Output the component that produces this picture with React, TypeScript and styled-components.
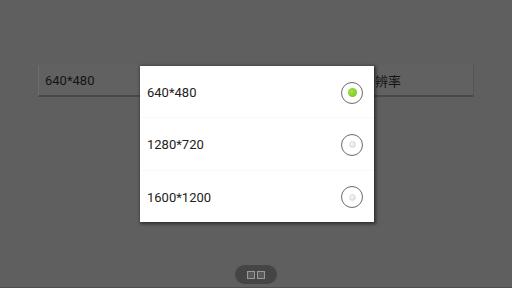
import styled, { createGlobalStyle } from "styled-components";

const GlobalStyle = createGlobalStyle`
  html, body {
    margin: 0;
    padding: 0;
    background: #5f5f5f;
  }
  * { box-sizing: border-box; }
`;

const Screen = styled.div`
  position: relative;
  width: 512px;
  height: 288px;
  overflow: hidden;
  background: #5f5f5f;
  display: flex;
  flex-direction: column;
  font-family: Roboto, "Noto Sans CJK SC", sans-serif;
`;

const FormRow = styled.div`
  display: grid;
  grid-template-columns: 1fr 118px;
  gap: 5px;
  padding: 65px 39px 0 38px;
`;

const Field = styled.div`
  height: 32px;
  display: flex;
  align-items: center;
  padding-left: 6px;
  font-size: 13px;
  color: #141414;
  background: #616161;
  border-left: 1px solid #6c6c6c;
  border-bottom: 2px solid #484848;
  box-shadow: 1px 0 0 #555;
`;

const NavBar = styled.div`
  margin-top: auto;
  display: flex;
  justify-content: center;
  padding-bottom: 3px;
  border-bottom: 1px solid #4f4f4f;
`;

const NavPill = styled.div`
  width: 42px;
  height: 19px;
  border-radius: 10px;
  background: #454545;
  display: flex;
  align-items: center;
  justify-content: center;
  gap: 2px;
`;

const NavIcon = styled.div`
  width: 8px;
  height: 8px;
  border: 1px solid #9a9a9a;
  background: #5a5a5a;
`;

const Overlay = styled.div`
  position: absolute;
  left: 140px;
  top: 66px;
  width: 234px;
  height: 156px;
  background: #fff;
  box-shadow: 1px 1px 3px 1px rgba(0, 0, 0, 0.5);
  display: flex;
  flex-direction: column;
`;

const Option = styled.div<{ $last?: boolean }>`
  flex: 1;
  display: flex;
  align-items: center;
  justify-content: space-between;
  padding: 2px 11px 0 7px;
  font-size: 13px;
  color: #222;
  border-bottom: ${(p) => (p.$last ? "none" : "1px solid #f8f8f8")};
`;

const Radio = styled.div`
  width: 22px;
  height: 22px;
  border-radius: 50%;
  border: 1.5px solid #6a6a6a;
  display: flex;
  align-items: center;
  justify-content: center;
  background: #fff;
`;

const Dot = styled.div<{ $on?: boolean }>`
  width: ${(p) => (p.$on ? "9px" : "7px")};
  height: ${(p) => (p.$on ? "9px" : "7px")};
  border-radius: 50%;
  background: ${(p) =>
    p.$on
      ? "radial-gradient(circle at 40% 40%, #a6e34a, #6cc21a)"
      : "radial-gradient(circle at 40% 40%, #fafafa, #d4d4d4)"};
  border: ${(p) => (p.$on ? "none" : "1px solid #dedede")};
`;

const options = [
  { label: "640*480", on: true },
  { label: "1280*720", on: false },
  { label: "1600*1200", on: false },
];

export default function App() {
  return (
    <>
      <GlobalStyle />
      <Screen>
        <FormRow>
          <Field>640*480</Field>
          <Field>分辨率</Field>
        </FormRow>
        <NavBar>
          <NavPill>
            <NavIcon />
            <NavIcon />
          </NavPill>
        </NavBar>
        <Overlay>
          {options.map((o, i) => (
            <Option key={o.label} $last={i === options.length - 1}>
              {o.label}
              <Radio>
                <Dot $on={o.on} />
              </Radio>
            </Option>
          ))}
        </Overlay>
      </Screen>
    </>
  );
}
